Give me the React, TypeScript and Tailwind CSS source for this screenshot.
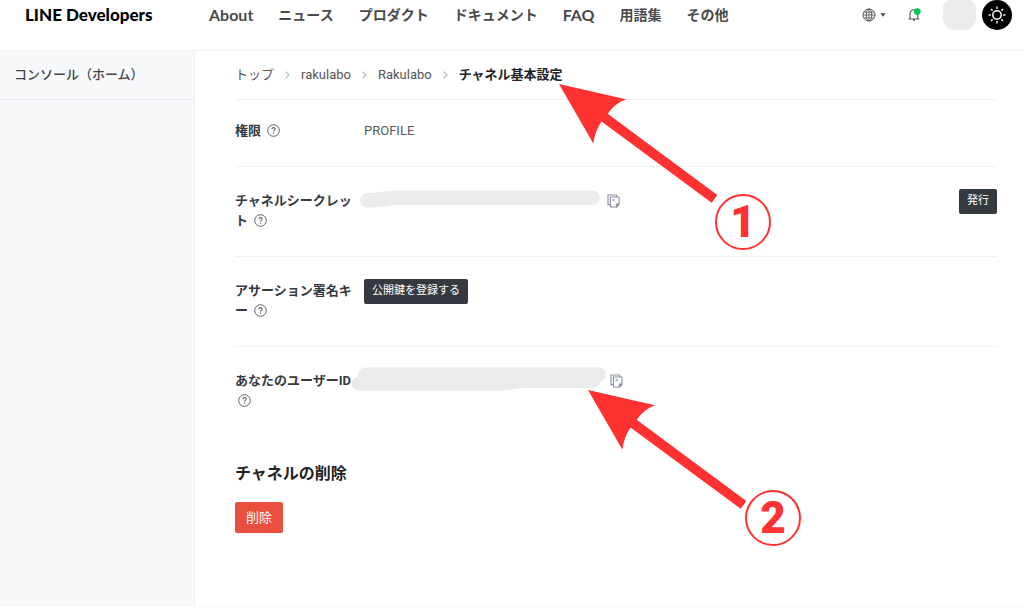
import type { ReactNode } from "react";

const NAV = ["About", "ニュース", "プロダクト", "ドキュメント", "FAQ", "用語集", "その他"];

function GlobeIcon() {
  return (
    <svg viewBox="0 0 14 14" className="size-[14px]" fill="none" stroke="#555" strokeWidth="1" aria-hidden="true">
      <circle cx="7" cy="7" r="6" />
      <ellipse cx="7" cy="7" rx="2.8" ry="6" />
      <path d="M7 1v12M1 7h12M1.8 4.2h10.4M1.8 9.8h10.4" strokeWidth="0.8" />
    </svg>
  );
}

function BellIcon() {
  return (
    <svg viewBox="0 0 14 14" className="size-[14px]" aria-hidden="true">
      <path d="M3 10.8V5.6C3 3.4 4.6 1.8 6.8 1.8S10.8 3.4 10.8 5.6v5.2M1.4 11h11" fill="none" stroke="#555" strokeWidth="1.1" />
      <path d="M6.2 11h1.6v2H6.2z" fill="#555" />
      <circle cx="10.3" cy="3.6" r="3.4" fill="#06c755" />
    </svg>
  );
}

function SunIcon() {
  return (
    <svg viewBox="0 0 20 20" className="size-5" fill="none" stroke="#fff" strokeWidth="1.5" aria-hidden="true">
      <circle cx="10" cy="10" r="4.2" />
      <path
        d="M10 1.5v2.4M10 16.1v2.4M1.5 10h2.4M16.1 10h2.4M4 4l1.6 1.6M14.4 14.4L16 16M4 16l1.6-1.6M14.4 5.6L16 4"
        stroke="#f3ead2"
      />
    </svg>
  );
}

function Chevron() {
  return (
    <svg viewBox="0 0 5 8" className="mx-[11px] h-2 w-[5px]" fill="none" stroke="#b4bac2" strokeWidth="1.2" aria-hidden="true">
      <path d="M0.6 0.6L4 4L0.6 7.4" />
    </svg>
  );
}

function CopyIcon() {
  return (
    <svg viewBox="0 0 13 14" className="h-[14px] w-[13px]" fill="none" stroke="#8791a3" strokeWidth="1.1" aria-hidden="true">
      <path d="M9.6 3V1H1v9.600h2" />
      <path d="M3.400 3H12v7.200L9.400 13h-6z" />
      <path d="M12 10H9.400V13z" fill="#8791a3" />
      <path d="M5.500 5h2.200v2.200H5.500z" fill="#a7b4cc" stroke="none" />
    </svg>
  );
}

function HelpButton() {
  return (
    <button type="button" aria-label="ヘルプ" className="ml-[3px] inline-block size-[13px] align-[-2px]">
      <svg viewBox="0 0 13 13" className="size-[13px]" fill="none" stroke="#5c6369" aria-hidden="true">
        <circle cx="6.5" cy="6.5" r="5.8" strokeWidth="1" />
        <path d="M4.9 5.3C4.9 4.2 5.6 3.6 6.5 3.6s1.6.6 1.6 1.5c0 1.2-1.6 1.3-1.6 2.5" strokeWidth="1.1" />
        <path d="M6.5 8.5v1.2" strokeWidth="1.2" />
      </svg>
    </button>
  );
}

function DarkButton({ children }: { children: ReactNode }) {
  return (
    <button type="button" className="h-[25px] rounded-xs bg-[#353a40] px-2 text-[11px] leading-4 text-white">
      {children}
    </button>
  );
}

function Row({ label, children, first, last }: { label: string; children: ReactNode; first?: boolean; last?: boolean }) {
  return (
    <div
      className={`flex items-start gap-[11px] ${first ? "pt-[18px] pb-[22px]" : "pt-[21px] pb-[25px]"} ${
        last ? "" : "border-b border-[#eff1f2]"
      }`}
    >
      <dt className="w-[118px] shrink-0 pt-[3px] font-bold break-all text-[#353a40]">
        {label} <HelpButton />
      </dt>
      <dd className="flex h-[26px] min-w-0 grow items-center">{children}</dd>
    </div>
  );
}

function Arrow({ className }: { className: string }) {
  return (
    <svg viewBox="0 0 160 120" className={`absolute h-[120px] w-[160px] ${className}`} fill="#ff3131" aria-hidden="true">
      <path d="M0 0L67 15.300Q55 20 48.700 29.800L158.300 111L152.700 118.700L42.500 37.500Q36 47 34.300 59.500Z" />
    </svg>
  );
}

function Marker({ n, className }: { n: number; className: string }) {
  return (
    <div
      className={`absolute flex size-14 items-center justify-center rounded-full border-2 border-[#ff3131] bg-white font-[Roboto,sans-serif] text-[44px] leading-none font-black text-[#ff3131] ${className}`}
    >
      {n}
    </div>
  );
}

export default function App() {
  return (
    <div className="relative flex min-h-screen flex-col overflow-x-hidden bg-white pb-[7px] font-[Roboto,'Noto_Sans_CJK_JP',sans-serif] text-[13px] leading-5">
      <header className="flex items-start border-b border-[#eeeff0] pr-3 pb-5 pl-[25px]">
        <a href="#" className="flex h-[30px] w-[184px] shrink-0 items-center font-[Lato,sans-serif] text-[17px] font-black whitespace-nowrap text-black">
          LINE Developers
        </a>
        <nav className="flex h-[30px] items-center gap-[25px] font-[Lato,'Noto_Sans_CJK_JP',sans-serif] text-sm font-bold whitespace-nowrap text-[#4a4a4a]">
          {NAV.map((item) => (
            <a key={item} href="#" className={/^[A-Z]/i.test(item) ? "text-base" : ""}>
              {item}
            </a>
          ))}
        </nav>
        <div className="ml-auto flex h-[30px] items-center">
          <button type="button" aria-label="言語" className="flex items-center gap-1">
            <GlobeIcon />
            <svg viewBox="0 0 6 4" className="h-1 w-[6px]" fill="#444" aria-hidden="true">
              <path d="M0.500 0.300h5L3 3.700z" />
            </svg>
          </button>
          <button type="button" aria-label="通知" className="ml-[21px]">
            <BellIcon />
          </button>
          <div className="ml-[22px] h-[30px] w-[33px] rounded-t-lg rounded-b-xl bg-[#ebebeb]" />
          <button type="button" aria-label="アカウント" className="ml-[6px] flex size-[30px] items-center justify-center rounded-full bg-black">
            <SunIcon />
          </button>
        </div>
      </header>

      <div className="flex grow border-b border-[#f7f7f7]">
        <aside className="w-[195px] shrink-0 border-r border-[#eff2f5] bg-[#f6f8fa]">
          <a href="#" className="flex h-[49px] items-center border-b border-[#e9ecf1] px-[14px] font-medium text-[#444]">
            コンソール（ホーム）
          </a>
        </aside>

        <main className="min-w-0 grow pr-[27px] pl-10">
          <nav aria-label="パンくず" className="flex h-[49px] items-center border-b border-[#eff1f2] text-[#555]">
            <a href="#">トップ</a>
            <Chevron />
            <a href="#">rakulabo</a>
            <Chevron />
            <a href="#">Rakulabo</a>
            <Chevron />
            <span className="font-bold text-[#222]">チャネル基本設定</span>
          </nav>

          <dl>
            <Row label="権限" first>
              <span className="text-[#555b61]">PROFILE</span>
            </Row>
            <Row label="チャネルシークレット">
              <svg viewBox="0 0 240 18" className="-ml-1 h-[18px] w-[240px] -translate-y-0.5" fill="#ebebeb" aria-hidden="true">
                <path d="M7.500 3C18 3 24 1 36 0.500H232.500A7.200 7.200 0 0 1 232.500 15H36C26 15.500 20 17.500 7.500 17.500A7.200 7.200 0 0 1 7.500 3Z" />
              </svg>
              <button type="button" aria-label="コピー" className="ml-[7px]">
                <CopyIcon />
              </button>
              <div className="ml-auto flex">
                <DarkButton>発行</DarkButton>
              </div>
            </Row>
            <Row label="アサーション署名キー">
              <DarkButton>公開鍵を登録する</DarkButton>
            </Row>
            <Row label="あなたのユーザーID" last>
              <svg viewBox="0 0 256 24" className="-ml-3 h-6 w-64 -translate-y-0.5" fill="#ebebeb" aria-hidden="true">
                <path d="M13 0.500H248A7.500 7.500 0 0 1 248 15C247 19 244 21 240 21H176C164 21 160 23.500 150 23.500H7A7 7 0 0 1 6 9.500C6 4 9 0.500 13 0.500Z" />
              </svg>
              <button type="button" aria-label="コピー" className="ml-[2px]">
                <CopyIcon />
              </button>
            </Row>
          </dl>

          <section className="pt-[26px]">
            <h2 className="text-base leading-6 font-bold text-[#222]">チャネルの削除</h2>
            <button type="button" className="mt-4 h-[31px] rounded-xs bg-[#eb4e3d] px-[11px] text-white">
              削除
            </button>
          </section>
        </main>
      </div>

      <Arrow className="top-[84px] left-[559px]" />
      <Marker n={1} className="top-[194px] left-[715px]" />
      <Arrow className="top-[390px] left-[588px]" />
      <Marker n={2} className="top-[490px] left-[745px]" />
    </div>
  );
}
